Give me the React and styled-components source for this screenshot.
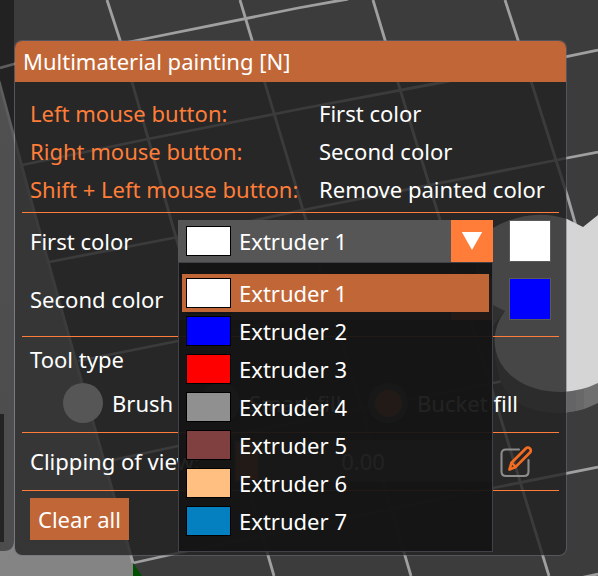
import React from "react";
import styled, { createGlobalStyle, css } from "styled-components";

const ORANGE = "#ff7d38";
const ORANGE_DARK = "#c16737";

const GlobalStyle = createGlobalStyle`
  * { box-sizing: border-box; }
  body {
    margin: 0;
    overflow: hidden;
    background: #3c3c3c;
    font-family: "Noto Sans", sans-serif;
  }
`;

const Stage = styled.main`
  position: relative;
  width: 598px;
  height: 576px;
  overflow: hidden;
  padding: 40px 0 0 14px;
  color: #fff;
  font-size: 22.04px;
  line-height: 38px;
  white-space: nowrap;
`;

const SceneSvg = styled.svg`
  position: absolute;
  inset: 0;
`;

const Panel = styled.section`
  position: relative;
  display: flex;
  flex-direction: column;
  width: 553px;
  height: 516px;
  border: 1px solid rgba(110, 110, 128, 0.5);
  border-radius: 8px;
  background: rgba(34, 34, 34, 0.8);
  background-clip: padding-box;
`;

const TitleBar = styled.h1`
  margin: 0;
  height: 41px;
  padding-left: 8px;
  border-radius: 7px 7px 0 0;
  background: ${ORANGE_DARK};
  font-size: 22px;
  font-weight: 400;
  line-height: 41px;
`;

const Body = styled.div`
  display: flex;
  flex-direction: column;
  padding: 12px 7px 0;
`;

const HelpGrid = styled.dl`
  display: grid;
  grid-template-columns: 289px 1fr;
  grid-auto-rows: 38px;
  margin: 0 0 4px;
  padding-left: 8px;
`;

const HelpKey = styled.dt`
  color: ${ORANGE};
`;

const HelpValue = styled.dd`
  margin: 0;
`;

const Separator = styled.hr`
  width: 537px;
  height: 1px;
  margin: 0;
  border: 0;
  background: ${ORANGE};
`;

const ColorRows = styled.div`
  display: flex;
  flex-direction: column;
  gap: 16px;
  padding: 7px 0 16px 8px;
`;

const ColorRow = styled.div`
  display: grid;
  grid-template-columns: 148px 315px 58px;
  height: 42px;
  line-height: 42px;
`;

const Combo = styled.div`
  position: relative;
  display: flex;
  align-items: center;
  padding-left: 8px;
  background: #565656;
`;

const ComboArrow = styled.span`
  display: flex;
  align-items: center;
  justify-content: center;
  width: 42px;
  height: 42px;
  margin-left: auto;
  background: ${ORANGE};
`;

const Swatch = styled.span`
  width: 45px;
  height: 30px;
  margin-right: 8px;
  border: 1px solid #000;
  background: ${(p) => p.$color};
`;

const ColorBox = styled.span`
  width: 42px;
  height: 42px;
  margin-left: 16px;
  border: 1px solid #5a5a5a;
  background: ${(p) => p.$color};
`;

const Popup = styled.ul`
  position: absolute;
  z-index: 2;
  top: 42px;
  left: 0;
  width: 315px;
  height: 290px;
  margin: 0;
  padding: 11px 3px;
  list-style: none;
  border: 1px solid #41414a;
  background: rgba(20, 20, 20, 0.94);
`;

const Option = styled.li`
  display: flex;
  align-items: center;
  height: 38px;
  padding-left: 4px;
  line-height: 38px;
  ${(p) => p.$selected && css`background: ${ORANGE_DARK};`}
`;

const ToolSection = styled.div`
  display: flex;
  flex-direction: column;
  height: 95px;
  padding: 3px 0 0 8px;
`;

const RadioGroup = styled.div`
  display: grid;
  grid-template-columns: 137px 168px auto;
  padding: 5px 0 0 33px;
`;

const Radio = styled.label`
  display: flex;
  align-items: center;
  gap: 9px;
  height: 40px;
`;

const Dot = styled.span`
  display: flex;
  align-items: center;
  justify-content: center;
  width: 40px;
  height: 40px;
  border-radius: 50%;
  background: #565656;
  ${(p) => p.$on && css`
    &::after {
      content: "";
      width: 27px;
      height: 27px;
      border-radius: 50%;
      background: ${ORANGE};
    }
  `}
`;

const ClipRow = styled.div`
  display: grid;
  grid-template-columns: 204px 258px 1fr;
  align-items: center;
  height: 57px;
  padding: 0 0 1px 8px;
`;

const Slider = styled.div`
  display: grid;
  grid-template-columns: 24px 1fr 24px;
  align-items: center;
  height: 42px;
  padding: 0 2px;
  background: #565656;
  text-align: center;
`;

const Knob = styled.span`
  width: 22px;
  height: 38px;
  background: ${ORANGE};
`;

const EditButton = styled.span`
  display: flex;
  padding: 2px 0 0 7px;
`;

const ClearButton = styled.button`
  width: 99px;
  height: 42px;
  margin: 7px 0 0 8px;
  padding: 0;
  border: 0;
  background: ${ORANGE_DARK};
  color: #fff;
  font: inherit;
`;

const extruders = ["#ffffff", "#0000ff", "#ff0000", "#909090", "#804040", "#ffbf80", "#0480c0"];

const help = [
  ["Left mouse button:", "First color"],
  ["Right mouse button:", "Second color"],
  ["Shift + Left mouse button:", "Remove painted color"],
];

function Scene() {
  return (
    <SceneSvg width="598" height="576" viewBox="0 0 598 576">
      <defs>
        <linearGradient id="backdrop" x1="0" y1="0" x2="0" y2="1">
          <stop offset="0" stopColor="#8a8a8a" />
          <stop offset="1" stopColor="#848484" />
        </linearGradient>
      </defs>
      <path d="M0 0H598V576H0Z" fill="#3c3c3c" />
      <path d="M-1 83L31 200L82 383L133 564V576H-1Z" fill="url(#backdrop)" />
      <g fill="none" stroke="#a0a0a0" strokeWidth="2.8">
        <path d="M-1 81L31 200L82 383L133 563" />
        <path d="M107 0L120 40L148 138L171 220L274 576" />
        <path d="M240 0L252 40L303 210L411 576" />
        <path d="M373 0L385 40L440 220L549 576" />
        <path d="M505 0L518 40L568 198L576 226" />
        <path d="M0 68L14 64L134 41L298 8L348 -1" />
        <path d="M22 165L148 139L300 109L444 82L598 50" />
        <path d="M49 262L178 237L298 211L567 158L598 152" />
        <path d="M78 361L178 341L493 280" />
        <path d="M113 460L178 446L493 383L598 362" />
        <path d="M133 563L178 553L493 488L598 467" />
        <path d="M580 578L598 574" />
      </g>
      <path d="M133 563V576H142Z" fill="#005000" />
      <path d="M490 300L505 311L493 326Z" fill="#6c6c6c" />
      <path d="M494.500 338L495 357L500 380Q513 413 560 413Q582 412 598 403V370Z" fill="#585858" />
      <path d="M566 380H576V411L566 412.500Z" fill="#646464" />
      <path d="M576 380H584V409L576 411Z" fill="#686868" />
      <path d="M584 380H598V403L584 409Z" fill="#6f6f6f" />
      <path d="M598 215L583 227L567 219Q530 207 493 228C482 236 476 250 476 264C476 284 484 301 493 305L505 311Q495 324 494.500 340Q495 353 500 362Q505 371 513 377Q532 392 562 392Q582 391 598 383Z" fill="#d5d5d5" />
      <path d="M0 0H14V540Q14 551 4 551H0Z" fill="#000" fillOpacity=".42" />
      <path d="M0 414H4V542H0Z" fill="#242424" />
    </SceneSvg>
  );
}

function ExtruderCombo({ index, children }) {
  return (
    <Combo>
      <Swatch $color={extruders[index]} />
      {children && <span>Extruder {index + 1}</span>}
      <ComboArrow>
        <svg width="22" height="18" viewBox="0 0 22 18">
          <path d="M.8 0H21.2L11 18Z" fill="#fff" />
        </svg>
      </ComboArrow>
      {children}
    </Combo>
  );
}

function EditIcon() {
  return (
    <svg width="34" height="34" viewBox="0 0 34 34" fill="none" strokeLinecap="round" strokeLinejoin="round">
      <path d="M20 4.500H7Q2.500 4.500 2.500 9V26.500Q2.500 31 7 31H25Q29.500 31 29.500 26.500V15" stroke="#8c8c8c" strokeWidth="2.100" />
      <path d="M10.500 24.500L12.500 17.800L26.800 3.500A2.800 2.800 0 0 1 31 7.500L16.700 21.900Z" stroke="#f36c21" strokeWidth="2.700" />
      <path d="M12.500 17.800L16.700 21.900" stroke="#f36c21" strokeWidth="2.200" />
    </svg>
  );
}

export default function App() {
  return (
    <>
      <GlobalStyle />
      <Stage>
        <Scene />
        <Panel>
          <TitleBar>Multimaterial painting [N]</TitleBar>
          <Body>
            <HelpGrid>
              {help.map(([key, value]) => (
                <React.Fragment key={key}>
                  <HelpKey>{key}</HelpKey>
                  <HelpValue>{value}</HelpValue>
                </React.Fragment>
              ))}
            </HelpGrid>
            <Separator />
            <ColorRows>
              <ColorRow>
                <span>First color</span>
                <ExtruderCombo index={0}>
                  <Popup>
                    {extruders.map((color, i) => (
                      <Option key={color} $selected={i === 0}>
                        <Swatch $color={color} />
                        <span>Extruder {i + 1}</span>
                      </Option>
                    ))}
                  </Popup>
                </ExtruderCombo>
                <ColorBox $color={extruders[0]} />
              </ColorRow>
              <ColorRow>
                <span>Second color</span>
                <ExtruderCombo index={1} />
                <ColorBox $color={extruders[1]} />
              </ColorRow>
            </ColorRows>
            <Separator />
            <ToolSection>
              <span>Tool type</span>
              <RadioGroup>
                <Radio><Dot />Brush</Radio>
                <Radio><Dot />Smart fill</Radio>
                <Radio><Dot $on />Bucket fill</Radio>
              </RadioGroup>
            </ToolSection>
            <Separator />
            <ClipRow>
              <span>Clipping of view:</span>
              <Slider><Knob /><span>0.00</span></Slider>
              <EditButton><EditIcon /></EditButton>
            </ClipRow>
            <Separator />
            <ClearButton>Clear all</ClearButton>
          </Body>
        </Panel>
      </Stage>
    </>
  );
}
